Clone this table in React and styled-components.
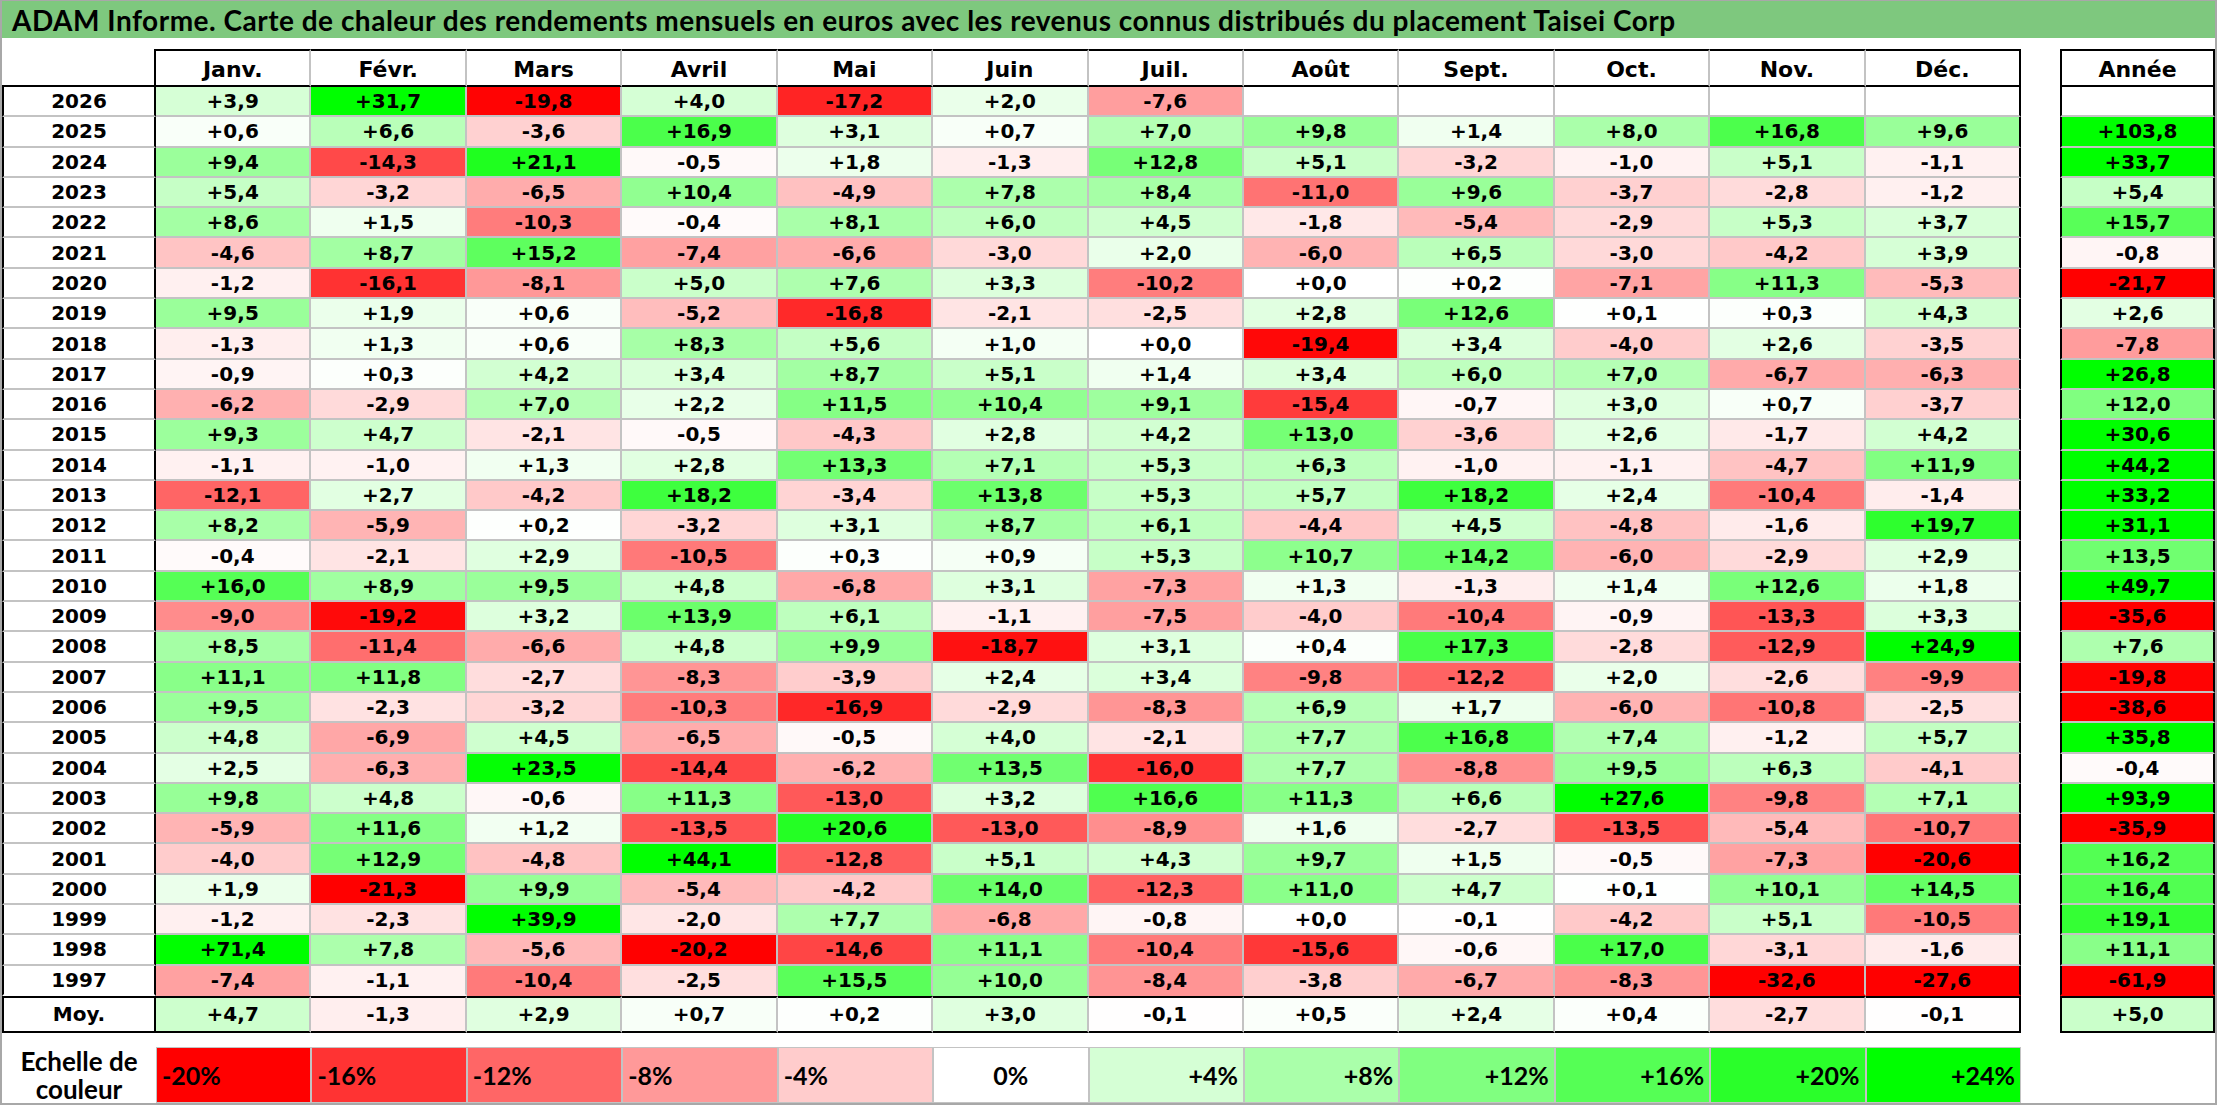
import React from "react";
import styled, { createGlobalStyle } from "styled-components";

const GlobalStyle = createGlobalStyle`
  html, body { margin: 0; padding: 0; background: #ffffff; }
  #root { width: 2217px; height: 1105px; }
`;

const MONTHS = ["Janv.", "Févr.", "Mars", "Avril", "Mai", "Juin", "Juil.", "Août", "Sept.", "Oct.", "Nov.", "Déc."];

const RAW = [
  ["2026", "+3,9 +31,7 -19,8 +4,0 -17,2 +2,0 -7,6 _ _ _ _ _", "_"],
  ["2025", "+0,6 +6,6 -3,6 +16,9 +3,1 +0,7 +7,0 +9,8 +1,4 +8,0 +16,8 +9,6", "+103,8"],
  ["2024", "+9,4 -14,3 +21,1 -0,5 +1,8 -1,3 +12,8 +5,1 -3,2 -1,0 +5,1 -1,1", "+33,7"],
  ["2023", "+5,4 -3,2 -6,5 +10,4 -4,9 +7,8 +8,4 -11,0 +9,6 -3,7 -2,8 -1,2", "+5,4"],
  ["2022", "+8,6 +1,5 -10,3 -0,4 +8,1 +6,0 +4,5 -1,8 -5,4 -2,9 +5,3 +3,7", "+15,7"],
  ["2021", "-4,6 +8,7 +15,2 -7,4 -6,6 -3,0 +2,0 -6,0 +6,5 -3,0 -4,2 +3,9", "-0,8"],
  ["2020", "-1,2 -16,1 -8,1 +5,0 +7,6 +3,3 -10,2 +0,0 +0,2 -7,1 +11,3 -5,3", "-21,7"],
  ["2019", "+9,5 +1,9 +0,6 -5,2 -16,8 -2,1 -2,5 +2,8 +12,6 +0,1 +0,3 +4,3", "+2,6"],
  ["2018", "-1,3 +1,3 +0,6 +8,3 +5,6 +1,0 +0,0 -19,4 +3,4 -4,0 +2,6 -3,5", "-7,8"],
  ["2017", "-0,9 +0,3 +4,2 +3,4 +8,7 +5,1 +1,4 +3,4 +6,0 +7,0 -6,7 -6,3", "+26,8"],
  ["2016", "-6,2 -2,9 +7,0 +2,2 +11,5 +10,4 +9,1 -15,4 -0,7 +3,0 +0,7 -3,7", "+12,0"],
  ["2015", "+9,3 +4,7 -2,1 -0,5 -4,3 +2,8 +4,2 +13,0 -3,6 +2,6 -1,7 +4,2", "+30,6"],
  ["2014", "-1,1 -1,0 +1,3 +2,8 +13,3 +7,1 +5,3 +6,3 -1,0 -1,1 -4,7 +11,9", "+44,2"],
  ["2013", "-12,1 +2,7 -4,2 +18,2 -3,4 +13,8 +5,3 +5,7 +18,2 +2,4 -10,4 -1,4", "+33,2"],
  ["2012", "+8,2 -5,9 +0,2 -3,2 +3,1 +8,7 +6,1 -4,4 +4,5 -4,8 -1,6 +19,7", "+31,1"],
  ["2011", "-0,4 -2,1 +2,9 -10,5 +0,3 +0,9 +5,3 +10,7 +14,2 -6,0 -2,9 +2,9", "+13,5"],
  ["2010", "+16,0 +8,9 +9,5 +4,8 -6,8 +3,1 -7,3 +1,3 -1,3 +1,4 +12,6 +1,8", "+49,7"],
  ["2009", "-9,0 -19,2 +3,2 +13,9 +6,1 -1,1 -7,5 -4,0 -10,4 -0,9 -13,3 +3,3", "-35,6"],
  ["2008", "+8,5 -11,4 -6,6 +4,8 +9,9 -18,7 +3,1 +0,4 +17,3 -2,8 -12,9 +24,9", "+7,6"],
  ["2007", "+11,1 +11,8 -2,7 -8,3 -3,9 +2,4 +3,4 -9,8 -12,2 +2,0 -2,6 -9,9", "-19,8"],
  ["2006", "+9,5 -2,3 -3,2 -10,3 -16,9 -2,9 -8,3 +6,9 +1,7 -6,0 -10,8 -2,5", "-38,6"],
  ["2005", "+4,8 -6,9 +4,5 -6,5 -0,5 +4,0 -2,1 +7,7 +16,8 +7,4 -1,2 +5,7", "+35,8"],
  ["2004", "+2,5 -6,3 +23,5 -14,4 -6,2 +13,5 -16,0 +7,7 -8,8 +9,5 +6,3 -4,1", "-0,4"],
  ["2003", "+9,8 +4,8 -0,6 +11,3 -13,0 +3,2 +16,6 +11,3 +6,6 +27,6 -9,8 +7,1", "+93,9"],
  ["2002", "-5,9 +11,6 +1,2 -13,5 +20,6 -13,0 -8,9 +1,6 -2,7 -13,5 -5,4 -10,7", "-35,9"],
  ["2001", "-4,0 +12,9 -4,8 +44,1 -12,8 +5,1 +4,3 +9,7 +1,5 -0,5 -7,3 -20,6", "+16,2"],
  ["2000", "+1,9 -21,3 +9,9 -5,4 -4,2 +14,0 -12,3 +11,0 +4,7 +0,1 +10,1 +14,5", "+16,4"],
  ["1999", "-1,2 -2,3 +39,9 -2,0 +7,7 -6,8 -0,8 +0,0 -0,1 -4,2 +5,1 -10,5", "+19,1"],
  ["1998", "+71,4 +7,8 -5,6 -20,2 -14,6 +11,1 -10,4 -15,6 -0,6 +17,0 -3,1 -1,6", "+11,1"],
  ["1997", "-7,4 -1,1 -10,4 -2,5 +15,5 +10,0 -8,4 -3,8 -6,7 -8,3 -32,6 -27,6", "-61,9"],
];

const ROWS = RAW.map(([year, months, annual]) => ({
  year,
  months: months.split(" ").map((s) => (s === "_" ? null : s)),
  annual: annual === "_" ? null : annual,
}));

const AVG = {
  months: "+4,7 -1,3 +2,9 +0,7 +0,2 +3,0 -0,1 +0,5 +2,4 +0,4 -2,7 -0,1".split(" "),
  annual: "+5,0",
};

const SCALE = [-20, -16, -12, -8, -4, 0, 4, 8, 12, 16, 20, 24];

const heat = (v) => {
  if (v === null || v === undefined || Number.isNaN(v)) return "#ffffff";
  if (v < 0) {
    const c = Math.round(255 * (1 - Math.min(1, -v / 20)));
    return `rgb(255,${c},${c})`;
  }
  const c = Math.round(255 * (1 - Math.min(1, v / 24)));
  return `rgb(${c},255,${c})`;
};

const num = (s) => (s === null ? null : parseFloat(s.replace(",", ".")));

const GRID = "#c3c3c3";
const INK = "#000000";
const ROW_TEMPLATE = "38px repeat(30, 30.3px) 37px";

const Page = styled.div`
  width: 2217px;
  height: 1105px;
  box-sizing: border-box;
  border-left: 2px solid #a8a8a8;
  border-right: 2px solid #a8a8a8;
  border-bottom: 2px solid #a8a8a8;
  border-top: 1px solid #a8a8a8;
  display: flex;
  flex-direction: column;
  background: #ffffff;
  overflow: hidden;
`;

const TitleBar = styled.div`
  height: 37px;
  flex: none;
  background: #7ec87e;
  display: flex;
  align-items: center;
  padding-left: 10px;
  font-family: Lato, "Open Sans", sans-serif;
  font-weight: 700;
  font-size: 28px;
  letter-spacing: 0.5px;
  color: #000000;
  white-space: nowrap;
`;

const Body = styled.div`
  display: flex;
  flex-direction: column;
  padding-top: 11px;
`;

const TablesRow = styled.div`
  display: flex;
  gap: 39px;
`;

const MainGrid = styled.div`
  width: 2019px;
  display: grid;
  grid-template-columns: 154px repeat(12, 1fr);
  grid-template-rows: ${ROW_TEMPLATE};
`;

const AnnualGrid = styled.div`
  width: 155px;
  display: grid;
  grid-template-columns: 1fr;
  grid-template-rows: ${ROW_TEMPLATE};
`;

const CellBase = styled.div`
  box-sizing: border-box;
  display: flex;
  align-items: center;
  justify-content: center;
  font-family: "DejaVu Sans", Verdana, sans-serif;
  font-weight: 700;
  font-size: 20px;
  color: #000000;
  white-space: nowrap;
`;

const Corner = styled(CellBase)`
  border-right: 2px solid ${INK};
  border-bottom: 2px solid ${INK};
`;

const MonthHead = styled(CellBase)`
  font-size: 22px;
  border-top: 2px solid ${INK};
  border-bottom: 2px solid ${INK};
  border-right: 2px solid ${(p) => (p.$last ? INK : GRID)};
  border-left: ${(p) => (p.$first ? `2px solid ${INK}` : "none")};
  padding-top: 2px;
`;

const YearCell = styled(CellBase)`
  border-left: 2px solid ${INK};
  border-right: 2px solid ${INK};
  border-bottom: 2px solid ${(p) => (p.$lastRow ? "transparent" : GRID)};
`;

const ValueCell = styled(CellBase)`
  background: ${(p) => p.$bg};
  border-right: 2px solid ${(p) => (p.$last ? INK : GRID)};
  border-left: ${(p) => (p.$first ? `2px solid ${INK}` : "none")};
  border-bottom: 2px solid ${(p) => (p.$lastRow ? "transparent" : GRID)};
`;

const AvgLabel = styled(CellBase)`
  border: 2px solid ${INK};
`;

const AvgCell = styled(CellBase)`
  background: ${(p) => p.$bg};
  border-top: 2px solid ${INK};
  border-bottom: 2px solid ${INK};
  border-right: 2px solid ${(p) => (p.$last ? INK : GRID)};
  border-left: ${(p) => (p.$first ? `2px solid ${INK}` : "none")};
`;

const ScaleRow = styled.div`
  margin-top: 14px;
  width: 2019px;
  height: 56px;
  display: grid;
  grid-template-columns: 154px repeat(12, 1fr);
`;

const ScaleLabel = styled.div`
  display: flex;
  align-items: center;
  justify-content: center;
  text-align: center;
  font-family: Lato, "Open Sans", sans-serif;
  font-weight: 700;
  font-size: 26px;
  line-height: 28px;
  color: #000000;
`;

const ScaleCell = styled.div`
  box-sizing: border-box;
  background: ${(p) => p.$bg};
  border: 1px solid ${GRID};
  display: flex;
  align-items: center;
  justify-content: ${(p) => p.$align};
  padding: 0 5px;
  font-family: Lato, "Open Sans", sans-serif;
  font-weight: 700;
  font-size: 25px;
  color: #000000;
`;

const fmtScale = (v) => (v > 0 ? `+${v}%` : `${v}%`);
const alignScale = (v) => (v < 0 ? "flex-start" : v > 0 ? "flex-end" : "center");

export default function App() {
  const lastIdx = ROWS.length - 1;
  return (
    <>
      <GlobalStyle />
      <Page>
        <TitleBar>
          ADAM Informe. Carte de chaleur des rendements mensuels en euros avec les revenus connus distribués du placement Taisei Corp
        </TitleBar>
        <Body>
          <TablesRow>
            <MainGrid>
              <Corner />
              {MONTHS.map((m, i) => (
                <MonthHead key={m} $last={i === 11}>
                  {m}
                </MonthHead>
              ))}
              {ROWS.map((r, ri) => (
                <React.Fragment key={r.year}>
                  <YearCell $lastRow={ri === lastIdx}>{r.year}</YearCell>
                  {r.months.map((v, i) => (
                    <ValueCell key={i} $bg={heat(num(v))} $last={i === 11} $lastRow={ri === lastIdx}>
                      {v}
                    </ValueCell>
                  ))}
                </React.Fragment>
              ))}
              <AvgLabel>Moy.</AvgLabel>
              {AVG.months.map((v, i) => (
                <AvgCell key={i} $bg={heat(num(v))} $last={i === 11}>
                  {v}
                </AvgCell>
              ))}
            </MainGrid>
            <AnnualGrid>
              <MonthHead $first $last>
                Année
              </MonthHead>
              {ROWS.map((r, ri) => (
                <ValueCell key={r.year} $bg={heat(num(r.annual))} $first $last $lastRow={ri === lastIdx}>
                  {r.annual}
                </ValueCell>
              ))}
              <AvgCell $bg={heat(num(AVG.annual))} $first $last>
                {AVG.annual}
              </AvgCell>
            </AnnualGrid>
          </TablesRow>
          <ScaleRow>
            <ScaleLabel>
              Echelle de
              <br />
              couleur
            </ScaleLabel>
            {SCALE.map((v) => (
              <ScaleCell key={v} $bg={heat(v)} $align={alignScale(v)}>
                {fmtScale(v)}
              </ScaleCell>
            ))}
          </ScaleRow>
        </Body>
      </Page>
    </>
  );
}
